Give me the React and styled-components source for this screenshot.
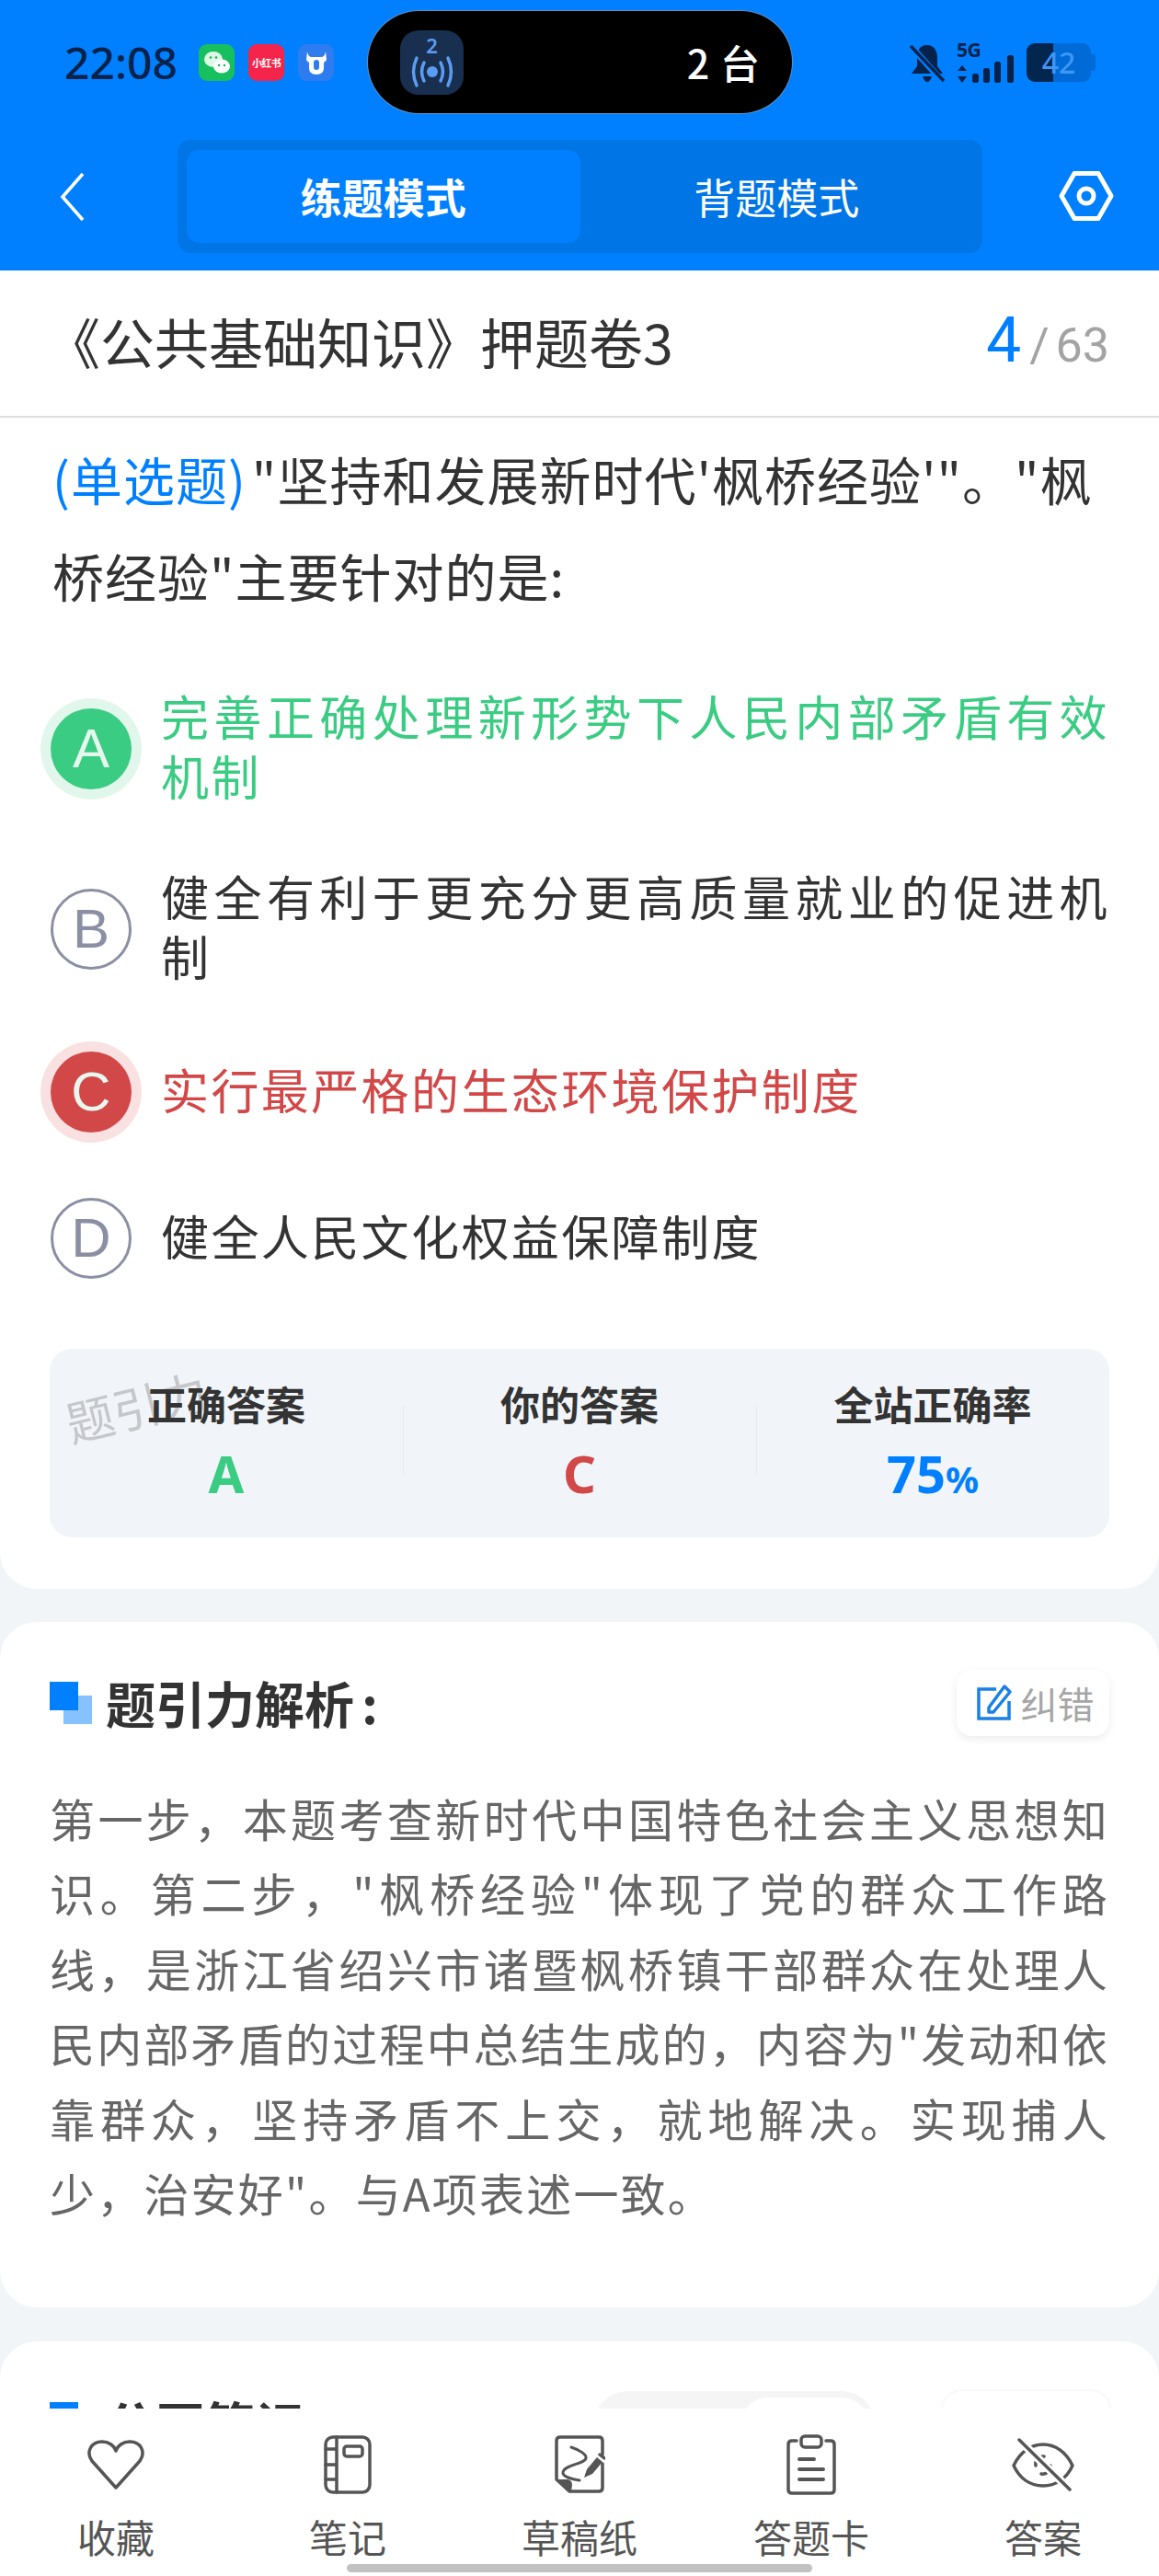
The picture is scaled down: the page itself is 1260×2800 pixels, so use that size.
import React from 'react';
import styled, { createGlobalStyle } from 'styled-components';

const GlobalStyle = createGlobalStyle`
  html, body { margin: 0; padding: 0; background: #f2f5f8; }
  * { box-sizing: border-box; }
  body { font-family: "Noto Sans CJK SC", "Noto Sans", sans-serif; }
`;

const Screen = styled.div`
  position: relative;
  width: 1260px;
  height: 2800px;
  overflow: hidden;
  background: #f2f5f8;
`;

const Header = styled.header`
  height: 294px;
  background: #0080ff;
  display: flex;
  flex-direction: column;
`;

const StatusBar = styled.div`
  height: 152px;
  padding: 12px 0 0 70px;
  display: flex;
  align-items: flex-start;
`;

const Clock = styled.span`
  width: 146px;
  margin-top: 28px;
  font: 500 48px/56px "Noto Sans", sans-serif;
  color: #04224a;
`;

const AppIcons = styled.div`
  display: flex;
  gap: 15px;
  margin-top: 36px;
  width: 184px;
`;

const AppIcon = styled.span`
  width: 39px;
  height: 40px;
  border-radius: 9px;
  background: ${p => p.$bg};
  display: flex;
  align-items: center;
  justify-content: center;
  color: #fff;
  font-size: 11px;
  line-height: 14px;
  letter-spacing: -0.6px;
  font-weight: 700;
  white-space: nowrap;
`;

const Island = styled.div`
  width: 461px;
  height: 111px;
  border-radius: 56px;
  background: #000;
  box-shadow: 0 0 0 1px #5c90c4;
  display: flex;
  align-items: center;
  justify-content: space-between;
  padding: 0 35px 0 35px;
`;

const IslandBadge = styled.div`
  width: 69px;
  height: 70px;
  border-radius: 20px;
  background: #182f4f;
  display: flex;
  flex-direction: column;
  align-items: center;
  justify-content: center;
`;

const BadgeDigit = styled.span`
  font: 600 22px/20px "Noto Sans", sans-serif;
  color: #5c9cf0;
`;

const IslandLabel = styled.span`
  color: #fff;
  font-size: 43px;
  line-height: 1.2;
  font-weight: 500;
  word-spacing: 2px;
`;

const StatusRight = styled.div`
  display: flex;
  align-items: flex-start;
  gap: 12px;
  margin: 35px 0 0 127px;
`;

const SignalBox = styled.div`
  position: relative;
  width: 64px;
  height: 44px;
`;

const SignalLabel = styled.span`
  position: absolute;
  left: 0;
  top: -6px;
  font: 700 21px/26px "Noto Sans", sans-serif;
  letter-spacing: -0.5px;
  color: #04224a;
`;

const Battery = styled.div`
  position: relative;
  width: 70px;
  height: 42px;
  border-radius: 9px;
  background: #006bd6;
`;

const BatteryFill = styled.span`
  display: block;
  width: 29px;
  height: 42px;
  border-radius: 9px 0 0 9px;
  background: #03264f;
`;

const BatteryLevel = styled.span`
  position: absolute;
  inset: 0;
  text-align: center;
  font: 500 32px/42px "Noto Sans", sans-serif;
  color: #3f97f5;
`;

const BatteryCap = styled.span`
  width: 5px;
  height: 18px;
  margin: 12px 0 0 -12px;
  border-radius: 0 3px 3px 0;
  background: #006bd6;
`;

const NavBar = styled.nav`
  height: 142px;
  display: flex;
  align-items: flex-start;
  padding-left: 64px;
`;

const IconSlot = styled.div`
  display: flex;
  align-items: center;
`;

const Segments = styled.div`
  width: 875px;
  height: 123px;
  margin-left: 101px;
  padding: 11px 10px;
  border-radius: 14px;
  background: #0075e6;
  display: grid;
  grid-template-columns: 1fr 1fr;
`;

const Segment = styled.div`
  border-radius: 14px;
  display: flex;
  align-items: center;
  justify-content: center;
  color: #fff;
  font-size: 45px;
  font-weight: ${p => (p.$active ? 700 : 400)};
  background: ${p => (p.$active ? '#0080ff' : 'transparent')};
`;

const QuestionCard = styled.section`
  height: 1433px;
  background: #fff;
  border-radius: 0 0 40px 40px;
`;

const TitleBar = styled.div`
  height: 160px;
  padding: 0 54px 6px 50px;
  border-bottom: 2px solid #dedede;
  display: flex;
  align-items: center;
  justify-content: space-between;
`;

const PaperTitle = styled.h1`
  margin: 0 0 0 0;
  font-size: 59px;
  font-weight: 400;
  color: #333;
  line-height: 1;
`;

const Progress = styled.div`
  display: flex;
  align-items: baseline;
  font-family: Roboto, sans-serif;
  color: #a3a3a3;
  font-size: 52px;
  word-spacing: -6px;
`;

const ProgressNow = styled.span`
  color: #0080ff;
  font-size: 68px;
  margin-right: 9px;
`;

const QuestionText = styled.p`
  margin: 0;
  padding: 13px 54px 0 57px;
  font-size: 56px;
  line-height: 105px;
  color: #333;
  letter-spacing: 1px;
`;

const QuestionType = styled.span`
  color: #0080ff;
  margin-right: 6px;
`;

const Options = styled.div`
  margin-top: 39px;
  padding: 0 54px 0 55px;
  display: flex;
  flex-direction: column;
`;

const OptionRow = styled.div`
  display: flex;
  align-items: center;
  gap: 32px;
  height: ${p => p.$h}px;
`;

const toneColors = { right: '#3acc82', wrong: '#d24747', none: '#333' };
const toneRings = { right: '#e2f7ec', wrong: '#f9e1e1', none: 'transparent' };

const OptionMark = styled.span`
  flex: none;
  width: 88px;
  height: 88px;
  border-radius: 50%;
  display: flex;
  align-items: center;
  justify-content: center;
  font: 400 60px/1 "Liberation Sans", sans-serif;
  color: ${p => (p.$tone === 'none' ? '#8a8fa3' : '#e6f7ee')};
  background: ${p => (p.$tone === 'none' ? 'transparent' : toneColors[p.$tone])};
  border: ${p => (p.$tone === 'none' ? '3px solid #8a8fa3' : 'none')};
  box-shadow: 0 0 0 11px ${p => toneRings[p.$tone]};
`;

const OptionText = styled.span`
  flex: 1;
  margin-bottom: 8px;
  font-size: 52px;
  line-height: 65px;
  letter-spacing: 2.4px;
  text-align: justify;
  color: ${p => toneColors[p.$tone]};
`;

const Stats = styled.div`
  margin: 40px 54px 0;
  height: 205px;
  border-radius: 24px;
  background: #f1f5f9;
  position: relative;
  display: grid;
  grid-template-columns: repeat(3, 1fr);
  padding-top: 31px;
`;

const Stat = styled.div`
  position: relative;
  display: flex;
  flex-direction: column;
  align-items: center;
  & + &::before {
    content: '';
    position: absolute;
    left: 0;
    top: 31px;
    height: 75px;
    width: 1px;
    background: #e6e9ed;
  }
`;

const StatLabel = styled.span`
  font-size: 43px;
  line-height: 56px;
  font-weight: 700;
  color: #333;
`;

const StatValue = styled.span`
  margin-top: 18px;
  font: 700 56px/60px "Noto Sans", sans-serif;
  color: ${p => p.$color};
`;

const StatUnit = styled.span`
  font-size: 40px;
`;

const Watermark = styled.span`
  position: absolute;
  left: 16px;
  top: 36px;
  font-size: 52px;
  color: rgba(120, 120, 120, 0.36);
  transform: rotate(-14deg);
  white-space: nowrap;
  line-height: 1;
`;

const Card = styled.section`
  margin-top: ${p => p.$top}px;
  background: #fff;
  border-radius: 40px;
  height: ${p => p.$h}px;
`;

const CardHead = styled.div`
  display: flex;
  align-items: center;
  justify-content: space-between;
  padding: 52px 54px 0 54px;
`;

const CardTitle = styled.h2`
  margin: 0;
  font-size: 54px;
  line-height: 70px;
  font-weight: 700;
  color: #333;
  display: flex;
  align-items: center;
  gap: 15px;
  white-space: pre;
  word-spacing: -4px;
`;

const TitleMark = styled.span`
  position: relative;
  width: 46px;
  height: 46px;
  &::before {
    content: '';
    position: absolute;
    right: 0;
    bottom: 0;
    width: 31px;
    height: 31px;
    background: #85c2ff;
  }
  &::after {
    content: '';
    position: absolute;
    left: 0;
    top: 0;
    width: 31px;
    height: 31px;
    background: #0080ff;
  }
`;

const FixButton = styled.div`
  width: 166px;
  height: 72px;
  border-radius: 16px;
  background: #fff;
  box-shadow: 0 3px 10px rgba(0, 0, 0, 0.08);
  display: flex;
  align-items: center;
  justify-content: center;
  gap: 9px;
  padding-left: 4px;
  font-size: 40px;
  color: #a6a6a6;
`;

const Analysis = styled.p`
  margin: 0;
  padding: 48px 54px 0;
  font-size: 49px;
  line-height: 81.4px;
  color: #666;
  text-align: justify;
  letter-spacing: 2.2px;
`;

const NotesHead = styled.div`
  display: flex;
  align-items: flex-start;
  padding: 54px 54px 0 54px;
`;

const NotesTabs = styled.div`
  width: 305px;
  height: 72px;
  margin-left: auto;
  border-radius: 36px 36px 0 0;
  background: #f5f5f5;
  padding: 7px 6px 0 159px;
`;

const NotesTab = styled.div`
  height: 64px;
  border-radius: 30px 30px 0 0;
  background: #fff;
`;

const NotesWrite = styled.div`
  width: 181px;
  height: 72px;
  margin-left: 74px;
  border-radius: 20px;
  background: #fff;
  box-shadow: 0 0 4px rgba(0, 0, 0, 0.08);
`;

const BottomBar = styled.footer`
  position: absolute;
  left: 0;
  right: 0;
  bottom: 0;
  height: 182px;
  background: #fff;
  display: grid;
  grid-template-columns: repeat(5, 1fr);
`;

const Tool = styled.div`
  display: flex;
  flex-direction: column;
  align-items: center;
  padding-top: 28px;
`;

const ToolIcon = styled.div`
  height: 66px;
  display: flex;
  align-items: center;
  justify-content: center;
`;

const ToolLabel = styled.span`
  margin-top: 17px;
  font-size: 42px;
  line-height: 56px;
  color: #555;
`;

const HomeBar = styled.div`
  position: absolute;
  left: 377px;
  top: 2787px;
  width: 506px;
  height: 9px;
  border-radius: 5px;
  background: #c2c2c2;
`;

const stroke = { fill: 'none', stroke: '#555', strokeWidth: 3.5, strokeLinecap: 'round', strokeLinejoin: 'round' };

const Chevron = () => (
  <svg width="28" height="54" viewBox="0 0 28 54" style={{ marginTop: 35 }}>
    <path d="M26 2 L4 27 L26 52" fill="none" stroke="#fff" strokeWidth="3.6" />
  </svg>
);

const SettingsHex = () => (
  <svg width="60" height="56" viewBox="0 0 60 56" style={{ margin: '33px 0 0 83px' }}>
    <path d="M17 3.5 H43 L57 28 L43 52.5 H17 L3 28 Z" fill="none" stroke="#fff" strokeWidth="5" strokeLinejoin="round" />
    <circle cx="30" cy="28" r="8" fill="none" stroke="#fff" strokeWidth="5" />
  </svg>
);

const BroadcastWaves = () => (
  <svg width="52" height="38" viewBox="0 0 52 38">
    <circle cx="26" cy="19" r="6" fill="#5c9cf0" />
    <g fill="none" stroke="#5c9cf0" strokeWidth="3.5" strokeLinecap="round">
      <path d="M17 9 Q12 19 17 29" />
      <path d="M35 9 Q40 19 35 29" />
      <path d="M9 4 Q2 19 9 34" />
      <path d="M43 4 Q50 19 43 34" />
    </g>
  </svg>
);

const WeChatGlyph = () => (
  <svg width="32" height="30" viewBox="0 0 32 30">
    <ellipse cx="12" cy="11.5" rx="10" ry="8.5" fill="#dff7e5" />
    <ellipse cx="21" cy="19" rx="9" ry="7.5" fill="#fff" />
    <circle cx="9" cy="9.5" r="1.3" fill="#17b45a" />
    <circle cx="15" cy="9.5" r="1.3" fill="#17b45a" />
    <circle cx="18" cy="18" r="1.2" fill="#17b45a" />
    <circle cx="24" cy="18" r="1.2" fill="#17b45a" />
  </svg>
);

const BullGlyph = () => (
  <svg width="28" height="30" viewBox="0 0 28 30">
    <path d="M4 3 Q5 9 9 9 H19 Q23 9 24 3 L25 12 Q24 14 22 15 V21 Q22 28 14 28 Q6 28 6 21 V15 Q4 14 3 12 Z" fill="#fff" />
    <rect x="11" y="12" width="6" height="11" rx="3" fill="#2d7cf0" />
  </svg>
);

const MuteBell = () => (
  <svg width="40" height="44" viewBox="0 0 40 44">
    <path d="M20 2 C28 2 31 9 31 16 V25 L37 33 H3 L9 25 V15 C9 8 12 2 20 2 Z" fill="#04224a" />
    <path d="M15 36 H25 Q23 42 20 42 Q17 42 15 36 Z" fill="#04224a" />
    <path d="M3 4 L37 42" stroke="#0080ff" strokeWidth="7" />
    <path d="M2 3 L38 41" stroke="#04224a" strokeWidth="3.5" />
  </svg>
);

const SignalBars = () => (
  <svg width="64" height="44" viewBox="0 0 64 44">
    <path d="M6 24 L11 30 H1 Z M6 43 L1 36 H11 Z" fill="#04224a" />
    <rect x="17" y="33" width="7" height="10" rx="2.5" fill="#04224a" />
    <rect x="29" y="27" width="7" height="16" rx="2.5" fill="#04224a" />
    <rect x="41" y="20" width="7" height="23" rx="2.5" fill="#04224a" />
    <rect x="55" y="13" width="7" height="30" rx="2.5" fill="#04224a" />
  </svg>
);

const EditIcon = () => (
  <svg width="40" height="42" viewBox="0 0 40 42">
    <path d="M22 6 H3 V38 H36 V19" fill="none" stroke="#1a80e6" strokeWidth="3.5" />
    <path d="M14 26 V31 H19 L37 9 L31 3 Z" fill="none" stroke="#1a80e6" strokeWidth="3.5" strokeLinejoin="round" />
  </svg>
);

const HeartIcon = () => (
  <svg width="64" height="56" viewBox="0 0 64 56">
    <path d="M32 53 L6 24 C-1 14 5 3 17 3 C24 3 30 7 32 13 C34 7 40 3 47 3 C59 3 65 14 58 24 Z" {...stroke} />
  </svg>
);

const NotebookIcon = () => (
  <svg width="52" height="64" viewBox="0 0 52 64">
    <rect x="2" y="2" width="48" height="60" rx="8" {...stroke} />
    <path d="M14 2 V62 M2 15 H14 M2 32 H14 M2 48 H14" {...stroke} />
    <rect x="22" y="12" width="20" height="11" rx="3" {...stroke} />
  </svg>
);

const DraftIcon = () => (
  <svg width="56" height="64" viewBox="0 0 56 64">
    <path d="M53 21 V6 Q53 2 49 2 H7 Q3 2 3 6 V48 L17 61 H49 Q53 61 53 57 V31" {...stroke} />
    <path d="M4 49 H15 Q19 50 19 54 L18 61 Z" fill="#555" stroke="#555" strokeWidth="2" strokeLinejoin="round" />
    <path d="M19 13 C28 16 36 21 35 25 C34 31 12 32 10 40 C9 45 20 48 28 49" {...stroke} strokeWidth="3" />
    <path d="M36 37 L47 24 L53 29 L42 42 L33 46 Z" fill="#555" />
    <path d="M50 21 L55 25" {...stroke} />
  </svg>
);

const ClipboardIcon = () => (
  <svg width="56" height="66" viewBox="0 0 56 66">
    <path d="M12 7 H7 Q3 7 3 11 V60 Q3 64 7 64 H49 Q53 64 53 60 V11 Q53 7 49 7 H44" {...stroke} />
    <rect x="17" y="2" width="22" height="12" rx="4" {...stroke} />
    <path d="M15 27 H31 M15 38 H41 M15 49 H41" fill="none" stroke="#555" strokeWidth="4" strokeLinecap="round" />
  </svg>
);

const HiddenEyeIcon = () => (
  <svg width="70" height="58" viewBox="0 0 70 58">
    <path d="M3 30 C10 15 22 7 35 7 C48 7 60 15 67 30 C60 45 48 52 35 52 C22 52 10 45 3 30 Z" {...stroke} />
    <path d="M27 30 A8.5 8.5 0 0 1 36 20 M43 30 A8.5 8.5 0 0 1 33 39" {...stroke} />
    <path d="M9 2 L64 56" fill="none" stroke="#fff" strokeWidth="9" />
    <path d="M9 2 L64 56" {...stroke} />
  </svg>
);

const options = [
  { key: 'A', tone: 'right', h: 196, text: '完善正确处理新形势下人民内部矛盾有效机制' },
  { key: 'B', tone: 'none', h: 196, text: '健全有利于更充分更高质量就业的促进机制' },
  { key: 'C', tone: 'wrong', h: 158, text: '实行最严格的生态环境保护制度' },
  { key: 'D', tone: 'none', h: 160, text: '健全人民文化权益保障制度' },
];

const tools = [
  { label: '收藏', icon: <HeartIcon /> },
  { label: '笔记', icon: <NotebookIcon /> },
  { label: '草稿纸', icon: <DraftIcon /> },
  { label: '答题卡', icon: <ClipboardIcon /> },
  { label: '答案', icon: <HiddenEyeIcon /> },
];

export default function App() {
  return (
    <Screen>
      <GlobalStyle />
      <Header>
        <StatusBar>
          <Clock>22:08</Clock>
          <AppIcons>
            <AppIcon $bg="#17c05f"><WeChatGlyph /></AppIcon>
            <AppIcon $bg="#f4244a">小红书</AppIcon>
            <AppIcon $bg="#2d7cf0"><BullGlyph /></AppIcon>
          </AppIcons>
          <Island>
            <IslandBadge>
              <BadgeDigit>2</BadgeDigit>
              <BroadcastWaves />
            </IslandBadge>
            <IslandLabel>2 台</IslandLabel>
          </Island>
          <StatusRight>
            <MuteBell />
            <SignalBox>
              <SignalLabel>5G</SignalLabel>
              <SignalBars />
            </SignalBox>
            <Battery>
              <BatteryFill />
              <BatteryLevel>42</BatteryLevel>
            </Battery>
            <BatteryCap />
          </StatusRight>
        </StatusBar>
        <NavBar>
          <IconSlot><Chevron /></IconSlot>
          <Segments>
            <Segment $active>练题模式</Segment>
            <Segment>背题模式</Segment>
          </Segments>
          <IconSlot><SettingsHex /></IconSlot>
        </NavBar>
      </Header>

      <QuestionCard>
        <TitleBar>
          <PaperTitle>《公共基础知识》押题卷3</PaperTitle>
          <Progress>
            <ProgressNow>4</ProgressNow>/ 63
          </Progress>
        </TitleBar>
        <QuestionText>
          <QuestionType>(单选题)</QuestionType>"坚持和发展新时代'枫桥经验'"。"枫桥经验"主要针对的是:
        </QuestionText>
        <Options>
          {options.map(o => (
            <OptionRow key={o.key} $h={o.h}>
              <OptionMark $tone={o.tone}>{o.key}</OptionMark>
              <OptionText $tone={o.tone}>{o.text}</OptionText>
            </OptionRow>
          ))}
        </Options>
        <Stats>
          <Watermark>题引力</Watermark>
          <Stat>
            <StatLabel>正确答案</StatLabel>
            <StatValue $color="#3acc82">A</StatValue>
          </Stat>
          <Stat>
            <StatLabel>你的答案</StatLabel>
            <StatValue $color="#d24747">C</StatValue>
          </Stat>
          <Stat>
            <StatLabel>全站正确率</StatLabel>
            <StatValue $color="#0080ff">75<StatUnit>%</StatUnit></StatValue>
          </Stat>
        </Stats>
      </QuestionCard>

      <Card $top={36} $h={745}>
        <CardHead>
          <CardTitle><TitleMark />题引力解析 :</CardTitle>
          <FixButton><EditIcon />纠错</FixButton>
        </CardHead>
        <Analysis>
          第一步，本题考查新时代中国特色社会主义思想知识。第二步，"枫桥经验"体现了党的群众工作路线，是浙江省绍兴市诸暨枫桥镇干部群众在处理人民内部矛盾的过程中总结生成的，内容为"发动和依靠群众，坚持矛盾不上交，就地解决。实现捕人少，治安好"。与A项表述一致。
        </Analysis>
      </Card>

      <Card $top={37} $h={400}>
        <NotesHead>
          <CardTitle><TitleMark />公开笔记</CardTitle>
          <NotesTabs><NotesTab /></NotesTabs>
          <NotesWrite />
        </NotesHead>
      </Card>

      <BottomBar>
        {tools.map(t => (
          <Tool key={t.label}>
            <ToolIcon>{t.icon}</ToolIcon>
            <ToolLabel>{t.label}</ToolLabel>
          </Tool>
        ))}
      </BottomBar>
      <HomeBar />
    </Screen>
  );
}
